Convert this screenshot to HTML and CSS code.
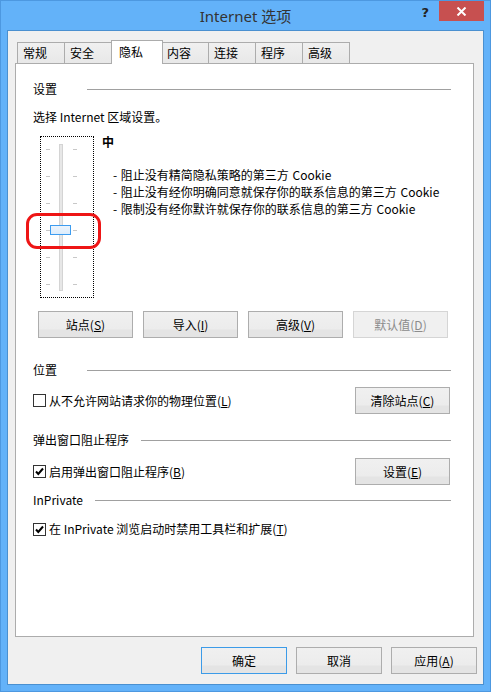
FILE: index.html
```html
<!DOCTYPE html>
<html lang="zh-CN">
<head>
<meta charset="utf-8">
<title>Internet 选项</title>
<link rel="stylesheet" href="styles.css">
</head>
<body>
<div class="window">
  <div class="titlebar">
    <div class="tb-spacer"></div>
    <div class="tb-title">Internet 选项</div>
    <div class="tb-controls">
      <span class="tb-help">?</span>
      <span class="tb-close">
        <svg width="11" height="9" viewBox="0 0 11 9"><path d="M1.5 0.5 L9.5 8.5 M9.5 0.5 L1.5 8.5" stroke="#fff" stroke-width="2" fill="none"/></svg>
      </span>
    </div>
  </div>
  <div class="client">
    <div class="tabs">
      <div class="tab">常规</div>
      <div class="tab">安全</div>
      <div class="tab tab-selected">隐私</div>
      <div class="tab">内容</div>
      <div class="tab">连接</div>
      <div class="tab">程序</div>
      <div class="tab tab-last">高级</div>
    </div>
    <div class="panel">
      <div class="group-head"><span class="group-label">设置</span><span class="rule"></span></div>
      <div class="intro">选择 Internet 区域设置。</div>
      <div class="slider-row">
        <div class="slider-wrap">
          <div class="slider">
            <svg width="52" height="160" viewBox="0 0 52 160">
              <g fill="#c8c8c8">
                <rect x="5" y="12" width="4" height="1"/><rect x="32" y="12" width="4" height="1"/>
                <rect x="5" y="39" width="4" height="1"/><rect x="32" y="39" width="4" height="1"/>
                <rect x="5" y="66" width="4" height="1"/><rect x="32" y="66" width="4" height="1"/>
                <rect x="5" y="93" width="4" height="1"/><rect x="32" y="93" width="4" height="1"/>
                <rect x="5" y="120" width="4" height="1"/><rect x="32" y="120" width="4" height="1"/>
                <rect x="5" y="147" width="4" height="1"/><rect x="32" y="147" width="4" height="1"/>
              </g>
              <rect x="18.5" y="7.5" width="3" height="146" fill="#e7e7e7" stroke="#d4d4d4"/>
              <defs>
                <linearGradient id="thumb" x1="0" y1="0" x2="0" y2="1">
                  <stop offset="0" stop-color="#ecf4fc"/>
                  <stop offset="1" stop-color="#dcecfc"/>
                </linearGradient>
              </defs>
              <rect x="9.5" y="88.5" width="20" height="9" fill="url(#thumb)" stroke="#3c9cf0"/>
            </svg>
          </div>
          <div class="highlight"></div>
        </div>
        <div class="level">
          <div class="level-name">中</div>
          <ul class="level-list">
            <li>- 阻止没有精简隐私策略的第三方 Cookie</li>
            <li>- 阻止没有经你明确同意就保存你的联系信息的第三方 Cookie</li>
            <li>- 限制没有经你默许就保存你的联系信息的第三方 Cookie</li>
          </ul>
        </div>
      </div>
      <div class="btn-row">
        <button class="btn btn-wide">站点(<u>S</u>)</button>
        <button class="btn btn-wide">导入(<u>I</u>)</button>
        <button class="btn btn-wide">高级(<u>V</u>)</button>
        <button class="btn btn-wide btn-disabled">默认值(<u>D</u>)</button>
      </div>

      <div class="group-head sec-loc"><span class="group-label">位置</span><span class="rule"></span></div>
      <div class="check-row row-loc">
        <label class="check">
          <span class="box"></span>从不允许网站请求你的物理位置(<u>L</u>)
        </label>
        <button class="btn btn-wide">清除站点(<u>C</u>)</button>
      </div>

      <div class="group-head sec-popup"><span class="group-label">弹出窗口阻止程序</span><span class="rule"></span></div>
      <div class="check-row row-popup">
        <label class="check">
          <span class="box"><svg width="11" height="11" viewBox="0 0 11 11"><path d="M2 5.5 L4.3 8 L9 2.5" stroke="#000" stroke-width="2" fill="none"/></svg></span>启用弹出窗口阻止程序(<u>B</u>)
        </label>
        <button class="btn btn-wide">设置(<u>E</u>)</button>
      </div>

      <div class="group-head sec-inpriv"><span class="group-label">InPrivate</span><span class="rule"></span></div>
      <div class="check-row row-inpriv">
        <label class="check">
          <span class="box"><svg width="11" height="11" viewBox="0 0 11 11"><path d="M2 5.5 L4.3 8 L9 2.5" stroke="#000" stroke-width="2" fill="none"/></svg></span>在 InPrivate 浏览启动时禁用工具栏和扩展(<u>T</u>)
        </label>
      </div>
    </div>
    <div class="footer">
      <button class="btn btn-foot btn-default">确定</button>
      <button class="btn btn-foot">取消</button>
      <button class="btn btn-foot">应用(<u>A</u>)</button>
    </div>
  </div>
</div>
</body>
</html>
```
FILE: styles.css
```css
* { box-sizing: border-box; }
html, body { margin: 0; padding: 0; }
body {
  width: 491px;
  height: 692px;
  overflow: hidden;
  font-family: "Noto Sans CJK SC", "Noto Sans", sans-serif;
  font-size: 12px;
  line-height: 16px;
  color: #000;
}
.window {
  width: 491px;
  height: 692px;
  background: #63b2f9;
  border: 1px solid #4d98e0;
  padding: 0 6px 6px 6px;
  display: flex;
  flex-direction: column;
}
.titlebar {
  height: 29px;
  display: grid;
  grid-template-columns: 1fr auto 1fr;
  align-items: start;
  margin: 0 -6px;
  padding: 0 6px 0 6px;
}
.tb-title {
  font-size: 15px;
  line-height: 20px;
  padding-top: 5px;
  color: #333;
  font-family: "Noto Sans", "Noto Sans CJK SC", sans-serif;
}
.tb-controls {
  justify-self: end;
  display: flex;
  align-items: flex-start;
}
.tb-help {
  font-family: "DejaVu Sans", sans-serif;
  font-weight: bold;
  font-size: 13px;
  line-height: 16px;
  color: #222;
  margin-top: 4px;
  margin-right: 10px;
}
.tb-close {
  width: 45px;
  height: 20px;
  background: #c75050;
  display: flex;
  align-items: center;
  justify-content: center;
}
.client {
  flex: 1;
  background: #f0f0f0;
  border: 1px solid #4a90d0;
  display: flex;
  flex-direction: column;
  padding: 11px 9px 10px 7px;
}
.tabs {
  display: flex;
  align-items: flex-end;
  height: 21px;
  padding-left: 2px;
  position: relative;
  z-index: 1;
}
.tab {
  width: 48px;
  height: 21px;
  border: 1px solid #acacac;
  border-bottom: none;
  background: linear-gradient(#f0f0f0, #e8e8e8);
  padding-left: 5px;
  line-height: 20px;
  margin-left: -1px;
}
.tab:first-child { margin-left: 0; }
.tab-selected {
  width: 52px;
  height: 24px;
  margin-bottom: -1px;
  margin-left: -1px;
  margin-right: -2px;
  background: #fff;
  padding-left: 7px;
  line-height: 22px;
  position: relative;
}
.tab-selected + .tab { margin-left: 0; }
.panel {
  flex: 1;
  background: #fff;
  border: 1px solid #acacac;
  padding: 17px 22px 0 17px;
}
.group-head {
  display: flex;
  align-items: center;
  height: 16px;
}
.group-label {
  min-width: 42px;
  margin-right: 12px;
  white-space: nowrap;
}
.rule {
  flex: 1;
  height: 1px;
  background: #a0a0a0;
}
.intro { margin-top: 12px; }
.slider-row {
  display: flex;
  margin-top: 11px;
}
.slider-wrap {
  position: relative;
  margin-left: 7px;
}
.slider {
  width: 54px;
  height: 162px;
  border: 1px dotted #000;
}
.slider svg { display: block; }
.highlight {
  position: absolute;
  left: -14px;
  top: 77px;
  width: 75px;
  height: 36px;
  border: 3px solid #ee1515;
  border-radius: 11px;
}
.level {
  margin-left: 8px;
  margin-top: -2px;
}
.level-name { font-weight: bold; }
.level-list {
  list-style: none;
  margin: 16px 0 0 0;
  padding: 0 0 0 11px;
}
.level-list li { line-height: 17px; white-space: nowrap; word-spacing: 1px; }
.btn {
  font-family: inherit;
  font-size: 12px;
  line-height: 16px;
  color: #000;
  height: 27px;
  border: 1px solid #adadad;
  background: linear-gradient(#f0f0f0 0%, #ececec 68%, #e4e4e4 72%, #e4e4e4 100%);
  padding: 0;
  margin: 0;
  text-align: center;
}
.btn u { text-decoration: underline; text-underline-offset: 1px; }
.btn-wide { width: 95px; }
.btn-disabled {
  color: #8c8c8c;
  border-color: #d5d5d5;
  background: #f0f0f0;
}
.btn-row {
  display: flex;
  gap: 10px;
  margin-top: 13px;
  margin-left: 5px;
}
.sec-loc { margin-top: 24px; }
.sec-popup { margin-top: 18px; }
.sec-inpriv { margin-top: 7px; }
.check-row {
  display: flex;
  align-items: center;
  justify-content: space-between;
  margin-right: 1px;
}
.row-loc { margin-top: 9px; }
.row-popup { margin-top: 10px; }
.row-inpriv { margin-top: 13px; }
.check {
  display: flex;
  align-items: center;
  white-space: nowrap;
}
.box {
  width: 13px;
  height: 13px;
  border: 1px solid #333;
  background: #fff;
  margin-right: 3px;
  display: flex;
  align-items: center;
  justify-content: center;
}
.box svg { display: block; }
.footer {
  display: flex;
  justify-content: flex-end;
  gap: 9px;
  margin-top: 10px;
  margin-right: -3px;
}
.btn-foot { width: 86px; }
.btn-default { border-color: #3c9be8; }
```
